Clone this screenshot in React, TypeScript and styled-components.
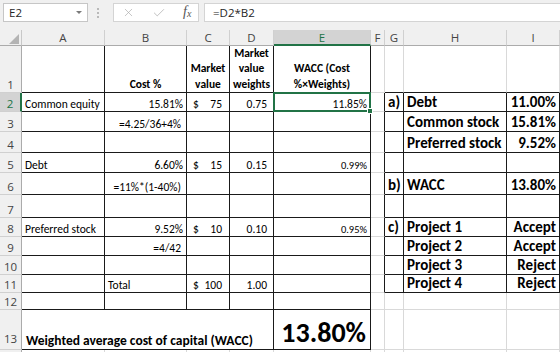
import React from 'react'
import styled, { createGlobalStyle } from 'styled-components'
import { X, Check } from 'lucide-react'

const GREEN = '#217346'
const GRID = '#d9d9d9'
const INK = '#1a1a1a'

const COLS = [22, 83, 82, 43, 44, 97, 14, 19, 103, 53]
const ROWS = [16, 47, 19, 20, 21, 20, 22, 23, 19, 19, 19, 18, 17, 40, 20]
const LETTERS = ['A', 'B', 'C', 'D', 'E', 'F', 'G', 'H', 'I']

type Spec = {
  t?: React.ReactNode
  a?: 'l' | 'r' | 'c'
  b?: boolean
  s?: number
  span?: number
  acc?: [string, string]
  head?: boolean
  sel?: boolean
  pr?: number
  pl?: number
}

const R = (t: string, extra: Partial<Spec> = {}): Spec => ({ t, a: 'r', ...extra })
const L = (t: string, extra: Partial<Spec> = {}): Spec => ({ t, a: 'l', ...extra })
const BOLD = { b: true, s: 15 }

// 13 spreadsheet rows (plus one clipped row), columns A..I
const data: Spec[][] = [
  [{}, { t: 'Cost %', head: true }, { t: 'Market\nvalue', head: true }, { t: 'Market\nvalue\nweights', head: true }, { t: 'WACC (Cost\n%×Weights)', head: true }, {}, {}, {}, {}],
  [L('Common equity'), R('15.81%'), { acc: ['$', '75'] }, R('0.75', { pr: 6 }), R('11.85%', { sel: true }), {}, L('a)', BOLD), L('Debt', BOLD), R('11.00%', BOLD)],
  [{}, R('=4.25/36+4%', { pr: 5 }), {}, {}, {}, {}, {}, L('Common stock', BOLD), R('15.81%', BOLD)],
  [{}, {}, {}, {}, {}, {}, {}, L('Preferred stock', BOLD), R('9.52%', BOLD)],
  [L('Debt'), R('6.60%'), { acc: ['$', '15'] }, R('0.15', { pr: 6 }), R('0.99%', { s: 10.5 }), {}, {}, {}, {}],
  [{}, R('=11%*(1-40%)', { pr: 5 }), {}, {}, {}, {}, L('b)', BOLD), L('WACC', BOLD), R('13.80%', BOLD)],
  [{}, {}, {}, {}, {}, {}, {}, {}, {}],
  [L('Preferred stock'), R('9.52%'), { acc: ['$', '10'] }, R('0.10', { pr: 6 }), R('0.95%', { s: 10.5 }), {}, L('c)', BOLD), L('Project 1', BOLD), R('Accept', BOLD)],
  [{}, R('=4/42', { pr: 5 }), {}, {}, {}, {}, {}, L('Project 2', BOLD), R('Accept', BOLD)],
  [{}, {}, {}, {}, {}, {}, {}, L('Project 3', BOLD), R('Reject', BOLD)],
  [{}, L('Total'), { acc: ['$', '100'] }, R('1.00', { pr: 6 }), {}, {}, {}, L('Project 4', BOLD), R('Reject', BOLD)],
  [{}, {}, {}, {}, {}, {}, {}, {}, {}],
  [L('Weighted average cost of capital (WACC)', { b: true, s: 13.5, span: 4, pl: 4 }), R('13.80%', { b: true, s: 28, pr: 4 }), {}, {}, {}, {}],
  [{}, {}, {}, {}, {}, {}, {}, {}, {}],
]

// which edges carry the black table borders
const blackRight = (c: number, r: number) =>
  (c <= 4 && r >= 1 && r <= 13) || (c >= 5 && c <= 8 && r >= 2 && r <= 11)
const blackBottom = (c: number, r: number) =>
  (c <= 4 && r >= 1 && r <= 13) || (c >= 6 && c <= 8 && r >= 1 && r <= 11)

// Excel sits text low in the cell; line box sized so glyphs land where they do there
const lineFor = (size: number) => (size > 20 ? 32 : size >= 13.5 ? 17 : 13)

const App: React.FC = () => {
  return (
    <>
      <GlobalStyle />
      <Page>
        <FormulaBar>
          <NameBox>
            E2
            <Caret />
          </NameBox>
          <Grip>
            <span />
            <span />
            <span />
          </Grip>
          <FxBox>
            <X size={13} strokeWidth={1.2} color="#a8a8a8" />
            <Check size={14} strokeWidth={1.2} color="#a8a8a8" />
            <Fx>
              f<sub>x</sub>
            </Fx>
          </FxBox>
          <FormulaInput>=D2*B2</FormulaInput>
        </FormulaBar>

        <Sheet>
          <Corner>
            <Triangle />
          </Corner>
          {LETTERS.map((l) => (
            <ColHead key={l} $active={l === 'E'}>
              {l}
            </ColHead>
          ))}

          {data.map((row, ri) => {
            const r = ri + 1
            let c = 0
            return (
              <React.Fragment key={r}>
                <RowHead $active={r === 2} $tall={r === 13}>
                  {r <= 13 ? r : ''}
                </RowHead>
                {row.map((cell, i) => {
                  const span = cell.span ?? 1
                  const col = c + span - 1
                  c += span
                  const right = blackRight(col, r) ? INK : GRID
                  const bottom = blackBottom(col, r) ? INK : GRID
                  if (cell.head) {
                    return (
                      <HeadCell key={i} $r={right} $b={bottom}>
                        {cell.t}
                      </HeadCell>
                    )
                  }
                  if (cell.acc) {
                    return (
                      <AccCell key={i} $r={right} $b={bottom}>
                        <span>{cell.acc[0]}</span>
                        <span>{cell.acc[1]}</span>
                      </AccCell>
                    )
                  }
                  return (
                    <Cell
                      key={i}
                      $r={right}
                      $b={bottom}
                      $align={cell.a === 'r' ? 'flex-end' : cell.a === 'c' ? 'center' : 'flex-start'}
                      $bold={cell.b}
                      $size={cell.s ?? 11.5}
                      $span={span}
                      $pr={cell.pr}
                      $pl={cell.pl}>
                      {cell.t}
                      {cell.sel && (
                        <Selection>
                          <Handle />
                        </Selection>
                      )}
                    </Cell>
                  )
                })}
              </React.Fragment>
            )
          })}
        </Sheet>
      </Page>
    </>
  )
}

const GlobalStyle = createGlobalStyle`
  body {
    margin: 0;
    background: #fff;
  }
  * {
    box-sizing: border-box;
  }
`

const Page = styled.div`
  width: 560px;
  height: 352px;
  overflow: hidden;
  background: #fff;
  font-family: Carlito, Calibri, Lato, 'Liberation Sans', sans-serif;
  color: #000;
`

const FormulaBar = styled.div`
  height: 30px;
  display: flex;
  align-items: flex-start;
  padding: 3px 0 0 3px;
  background: #f0f0f0;
  font-family: 'Open Sans', 'Liberation Sans', sans-serif;
  font-size: 11.5px;
  color: #262626;
`

const NameBox = styled.div`
  width: 85px;
  height: 19px;
  display: flex;
  align-items: center;
  justify-content: space-between;
  padding: 0 5px 0 5px;
  background: #fff;
  border: 1px solid #c6c6c6;
`

const Caret = styled.span`
  width: 0;
  height: 0;
  border-left: 3px solid transparent;
  border-right: 3px solid transparent;
  border-top: 3px solid #7a7a7a;
`

const Grip = styled.div`
  display: flex;
  flex-direction: column;
  gap: 2px;
  margin: 5px 14px 0 9px;

  span {
    width: 2px;
    height: 2px;
    background: #b9b9b9;
  }
`

const FxBox = styled.div`
  width: 86px;
  height: 19px;
  display: flex;
  align-items: center;
  gap: 17px;
  padding-left: 8px;
  background: #fff;
  border: 1px solid #d4d4d4;
`

const Fx = styled.span`
  font-family: 'Liberation Serif', serif;
  font-style: italic;
  font-size: 14px;
  line-height: 14px;
  color: #555;

  sub {
    font-size: 10px;
    vertical-align: -1px;
  }
`

const FormulaInput = styled.div`
  flex: 1;
  height: 19px;
  display: flex;
  align-items: center;
  margin-left: 5px;
  padding-left: 8px;
  background: #fff;
  border: 1px solid #d4d4d4;
  border-right: 0;
`

const Sheet = styled.div`
  display: grid;
  grid-template-columns: ${COLS.map((w) => `${w}px`).join(' ')};
  grid-template-rows: ${ROWS.map((h) => `${h}px`).join(' ')};
`

const Corner = styled.div`
  position: relative;
  background: #f0f0f0;
  border-right: 1px solid #c8c8c8;
  border-bottom: 1px solid #ababab;
`

const Triangle = styled.div`
  position: absolute;
  right: 2px;
  bottom: 1px;
  width: 10px;
  height: 10px;
  background: #b4b4b4;
  clip-path: polygon(100% 0, 100% 100%, 0 100%);
`

const ColHead = styled.div<{ $active?: boolean }>`
  display: flex;
  align-items: center;
  justify-content: center;
  background: ${(p) => (p.$active ? '#d3d3d3' : '#f0f0f0')};
  color: ${(p) => (p.$active ? GREEN : '#444')};
  border-right: 1px solid #d0d0d0;
  border-bottom: ${(p) => (p.$active ? `2px solid ${GREEN}` : '1px solid #ababab')};
  font-family: 'Open Sans', 'Liberation Sans', sans-serif;
  font-size: 11.5px;
`

const RowHead = styled.div<{ $active?: boolean; $tall?: boolean }>`
  display: flex;
  align-items: flex-end;
  justify-content: center;
  padding-bottom: ${(p) => (p.$tall ? 3 : 0)}px;
  background: ${(p) => (p.$active ? '#d3d3d3' : '#f0f0f0')};
  color: ${(p) => (p.$active ? GREEN : '#444')};
  border-right: ${(p) => (p.$active ? `2px solid ${GREEN}` : '1px solid #ababab')};
  border-bottom: 1px solid #d0d0d0;
  font-family: 'Open Sans', 'Liberation Sans', sans-serif;
  font-size: 11.5px;
  line-height: 14px;
`

const Cell = styled.div<{
  $r: string
  $b: string
  $align: string
  $bold?: boolean
  $size: number
  $span: number
  $pr?: number
  $pl?: number
}>`
  position: relative;
  grid-column: span ${(p) => p.$span};
  display: flex;
  align-items: flex-end;
  justify-content: ${(p) => p.$align};
  padding: 0 ${(p) => p.$pr ?? 3}px 0 ${(p) => p.$pl ?? 3}px;
  border-right: 1px solid ${(p) => p.$r};
  border-bottom: 1px solid ${(p) => p.$b};
  font-size: ${(p) => p.$size}px;
  font-weight: ${(p) => (p.$bold ? 700 : 400)};
  line-height: ${(p) => lineFor(p.$size)}px;
  white-space: nowrap;
`

const HeadCell = styled.div<{ $r: string; $b: string }>`
  display: flex;
  align-items: flex-end;
  justify-content: center;
  border-right: 1px solid ${(p) => p.$r};
  border-bottom: 1px solid ${(p) => p.$b};
  font-size: 11.5px;
  font-weight: 700;
  line-height: 15.5px;
  text-align: center;
  white-space: pre-line;
`

const AccCell = styled.div<{ $r: string; $b: string }>`
  display: flex;
  align-items: flex-end;
  justify-content: space-between;
  padding: 0 7px 0 6px;
  border-right: 1px solid ${(p) => p.$r};
  border-bottom: 1px solid ${(p) => p.$b};
  font-size: 11.5px;
  line-height: 13px;
`

const Selection = styled.div`
  position: absolute;
  top: -1px;
  left: -1px;
  right: -1px;
  bottom: -1px;
  border: 2px solid ${GREEN};
  z-index: 2;
  pointer-events: none;
`

const Handle = styled.div`
  position: absolute;
  right: -4px;
  bottom: -4px;
  width: 6px;
  height: 6px;
  background: ${GREEN};
  border: 1px solid #fff;
`

export default App
